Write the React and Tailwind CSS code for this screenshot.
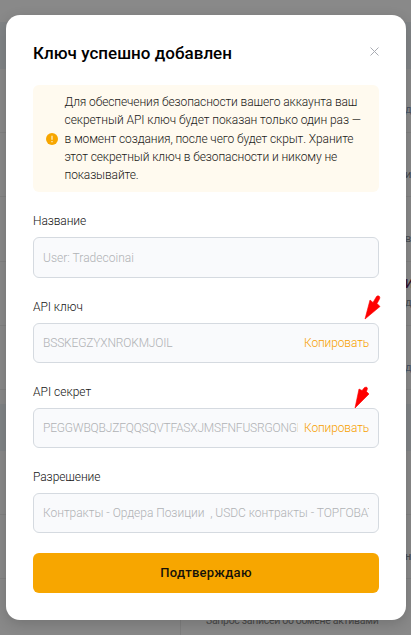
import { clsx } from "clsx";

function BackRow({ height, band, children }) {
  return (
    <div
      className={clsx(
        "flex w-full shrink-0 overflow-hidden border-b pl-[405px] text-[11px] leading-[14px] whitespace-nowrap text-[#4a4d52]",
        height,
        band ? "border-[#818486] bg-[#818486]" : "border-[#818181]"
      )}
    >
      {children}
    </div>
  );
}

function Backdrop() {
  return (
    <div className="flex h-full w-full flex-col bg-[#898989]">
      <div className="h-[22px] shrink-0" />
      <BackRow height="h-[47px]" band />
      <BackRow height="h-[64px]"><span className="pt-[34px] text-[#4a5464]">де</span></BackRow>
      <BackRow height="h-[64px]"><span className="pt-[35px] text-[#44474c]">иц</span></BackRow>
      <BackRow height="h-[65px]"><span className="pt-[35px]">вл</span></BackRow>
      <BackRow height="h-[64px]">
        <div className="flex flex-col pt-[15px]">
          <span className="text-[12px] font-medium text-[#32122a]">И</span>
          <span className="pt-[5px]">де</span>
        </div>
      </BackRow>
      <BackRow height="h-[64px]"><span className="pt-[35px] text-[#4a5464]">де</span></BackRow>
      <div className="h-[14px] shrink-0" />
      <BackRow height="h-[47px]" band />
      <BackRow height="h-[64px]" />
      <BackRow height="h-[64px]"><span className="pt-[35px] font-medium">н</span></BackRow>
      <div className="flex flex-1 overflow-hidden">
        <div className="w-[181px] border-r border-[#7e7e7e]" />
        <div className="pt-[34px] pl-[25px] text-[10.5px] leading-[16px] tracking-[-0.31px] whitespace-nowrap text-[#484848]">
          Запрос записей об обмене активами
        </div>
      </div>
    </div>
  );
}

function RedArrow({ place, d }) {
  return (
    <svg className={clsx("absolute", place)} width="18" height="26" viewBox="0 0 18 26">
      <path d={d} fill="#ff0000" stroke="#ff0000" strokeWidth="0.6" strokeLinejoin="round" />
    </svg>
  );
}

function Field({ label, labelTracking, value, copy, tracking, size = "h-[40px]", gap, arrow }) {
  return (
    <div className={clsx("relative flex flex-col", gap)}>
      <div className={clsx("h-[24px] text-[12px] leading-[16px] font-light text-[#141414]", labelTracking)}>{label}</div>
      <div className={clsx("flex items-center rounded-[6px] border border-[#d5dae0] bg-[#f9fafc] px-[9px] text-[12px] font-light leading-[16px]", size)}>
        <div className={clsx("min-w-0 flex-1 overflow-hidden whitespace-pre text-[#b0b2b5]", tracking)}>{value}</div>
        {copy && <button className="ml-[6px] w-[65px] text-left font-light tracking-[-0.13px] whitespace-nowrap text-[#f79f00]">Копировать</button>}
      </div>
      {arrow}
    </div>
  );
}

const noticeLines = [
  { text: "Для обеспечения безопасности вашего аккаунта ваш", style: "tracking-[-0.11px]" },
  { text: "секретный API ключ будет показан только один раз —", style: "tracking-[-0.06px]" },
  { text: "в момент создания, после чего будет скрыт. Храните", style: "tracking-[-0.11px]" },
  { text: "этот секретный ключ в безопасности и никому не", style: "tracking-[-0.1px]" },
  { text: "показывайте.", style: "tracking-[-0.12px]" },
];

export default function App() {
  return (
    <div className="relative h-[635px] w-[411px] overflow-hidden font-['Roboto',sans-serif]">
      <Backdrop />
      <div className="absolute top-[15px] left-[6px] flex h-[605px] w-[400px] flex-col rounded-[14px] bg-white px-[27px] shadow-[0_4px_14px_rgba(0,0,0,0.16)]">
        <div className="flex h-[70px] items-start justify-between">
          <h1 className="pt-[28px] text-[17px] leading-[20px] font-medium tracking-[0.02px] whitespace-nowrap text-black">Ключ успешно добавлен</h1>
          <button aria-label="Закрыть" className="mt-[32px]">
            <svg width="9" height="9" viewBox="0 0 9 9" fill="none" stroke="#a9acb3" strokeWidth="1">
              <path d="M.5.5l8 8M8.500.5l-8 8" />
            </svg>
          </button>
        </div>

        <div className="flex h-[107px] shrink-0 items-center rounded-[6px] bg-[#fffaef] pl-[13px]">
          <svg className="shrink-0" width="12" height="12" viewBox="0 0 12 12">
            <circle cx="6" cy="6" r="6" fill="#f7a600" />
            <path d="M6 2.800v4M6 8v1.300" stroke="#fff3d6" strokeWidth="1.200" />
          </svg>
          <div className="ml-[6.5px] flex flex-col pt-[0.5px] text-[12px] leading-[18.25px] font-light whitespace-nowrap text-[#1a1917]">
            {noticeLines.map((l) => (
              <span key={l.text} className={l.style}>{l.text}</span>
            ))}
          </div>
        </div>

        <Field gap="mt-[21px]" size="h-[41px]" label="Название" labelTracking="tracking-[-0.1px]" value="User: Tradecoinai" tracking="tracking-[0.02px]" />
        <Field
          gap="mt-[21px]"
          label="API ключ"
          labelTracking="tracking-[-0.05px]"
          value="BSSKEGZYXNROKMJOIL"
          copy
          tracking="tracking-[-0.17px]"
          arrow={<RedArrow place="top-[-5px] left-[331px]" d="M1 25 L6 6 L9 8.500 L12.500 2.500 Q14 1 15.500 2.500 Q16.500 3.500 15 6 L13 9.500 L16 12.500 Z" />}
        />
        <Field
          gap="mt-[21px]"
          label="API секрет"
          labelTracking="tracking-[0px]"
          value="PEGGWBQBJZFQQSQVTFASXJMSFNFUSRGONGB"
          copy
          tracking="tracking-[-0.19px]"
          arrow={<RedArrow place="top-[1px] left-[321px]" d="M1 23 L5 4 L8 5.500 L10.500 2.500 L12.500 2 L13.500 3.500 L12.500 6.500 L15 9 Z" />}
        />
        <Field gap="mt-[21px]" label="Разрешение" labelTracking="tracking-[-0.07px]" value="Контракты - Ордера Позиции  , USDC контракты - ТОРГОВАТ" tracking="tracking-[-0.03px]" />

        <button className="mt-[20px] h-[40px] shrink-0 rounded-[6px] bg-[#f7a600] text-[13px] leading-[20px] font-medium tracking-[0.3px] text-[#15120a]">
          Подтверждаю
        </button>
      </div>
    </div>
  );
}
